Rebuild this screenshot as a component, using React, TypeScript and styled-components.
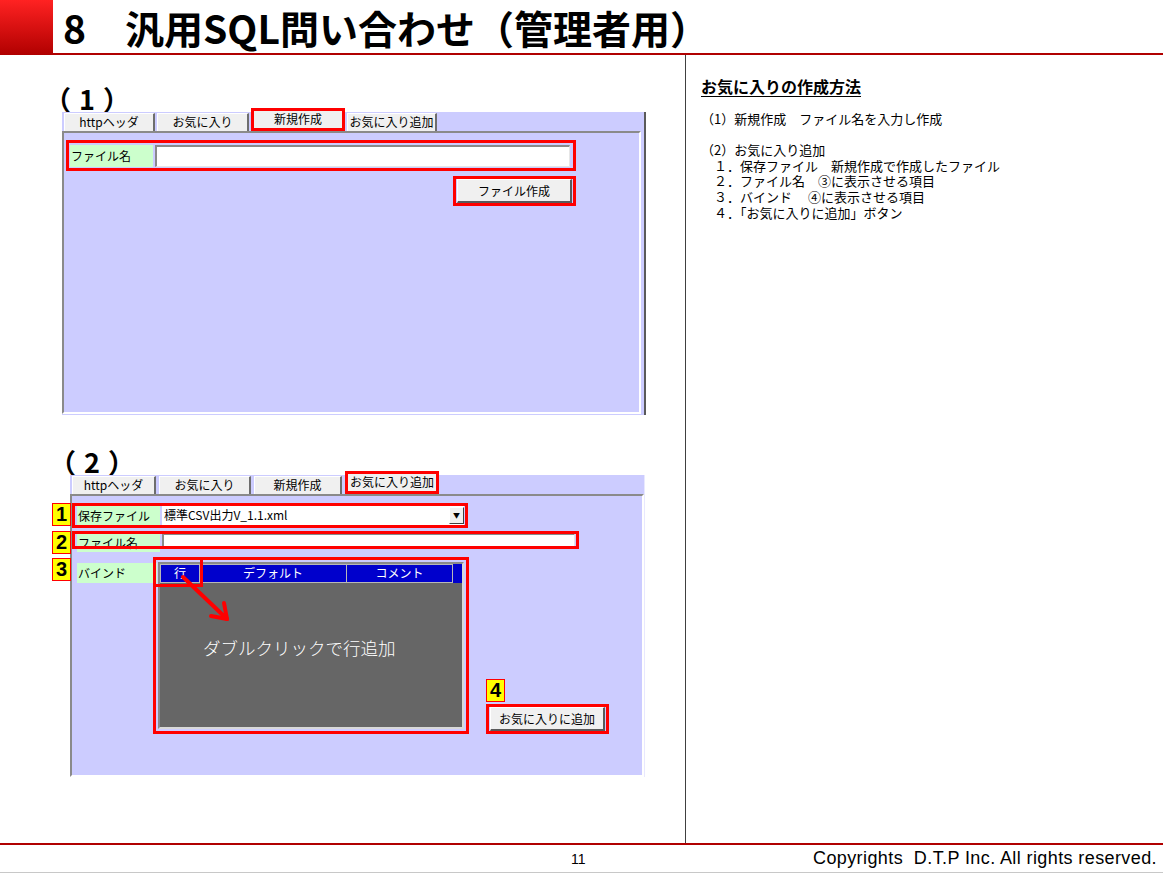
import React from "react";
import styled, { createGlobalStyle } from "styled-components";

const Global = createGlobalStyle`
  html, body { margin: 0; padding: 0; background: #fff; }
  body { font-family: "Noto Sans CJK JP", "Noto Sans", sans-serif; color: #000; }
  * { box-sizing: border-box; }
`;

const Page = styled.div`
  width: 1163px;
  height: 873px;
  display: flex;
  flex-direction: column;
  overflow: hidden;
`;

const Header = styled.header`
  display: flex;
  height: 55px;
  flex: none;
`;

const RedBlock = styled.div`
  width: 53px;
  background: linear-gradient(#ff2222, #b00000);
`;

const TitleBar = styled.div`
  flex: 1;
  display: flex;
  align-items: center;
  padding-left: 10px;
  border-bottom: 2px solid #b00000;
`;

const Title = styled.h1`
  margin: 0;
  font-size: 39px;
  font-weight: 700;
  line-height: 48px;
  white-space: nowrap;
  font-family: "Noto Sans CJK JP", sans-serif;
`;

const Main = styled.main`
  flex: 1;
  min-height: 0;
  display: grid;
  grid-template-columns: 685px 1px 1fr;
`;

const LeftCol = styled.section`
  display: flex;
  flex-direction: column;
  padding-top: 30px;
`;

const Divider = styled.div`
  background: #404040;
`;

const RightCol = styled.section`
  padding: 21px 0 0 15px;
`;

const Figure = styled.div<{ $left: number; $top?: number }>`
  display: flex;
  flex-direction: column;
  align-items: flex-start;
  margin-left: ${(p) => p.$left}px;
  margin-top: ${(p) => p.$top ?? 0}px;
`;

const Caption = styled.div<{ $shift: number }>`
  font-size: 27px;
  font-weight: 700;
  line-height: 27px;
  height: 27px;
  letter-spacing: 8px;
  margin-left: ${(p) => p.$shift}px;
  white-space: nowrap;
`;

const Window = styled.div<{ $w: number; $h: number; $edge?: boolean }>`
  width: ${(p) => p.$w}px;
  height: ${(p) => p.$h}px;
  background: #ccccff;
  display: flex;
  flex-direction: column;
  ${(p) =>
    p.$edge
      ? "border-right: 2px solid #5a5a5a; padding-right: 3px; padding-bottom: 1px;"
      : "border-right: 1px solid #e8e8ff;"}
`;

const TabStrip = styled.div<{ $gap: number; $pad: number }>`
  display: flex;
  align-items: flex-end;
  gap: ${(p) => p.$gap}px;
  height: 19px;
  padding-left: ${(p) => p.$pad}px;
  flex: none;
`;

const Tab = styled.div<{ $w: number }>`
  width: ${(p) => p.$w}px;
  height: 18px;
  background: #f0f0f0;
  font-size: 12px;
  line-height: 16px;
  text-align: center;
  border-top: 1px solid #ffffff;
  border-left: 1px solid #ffffff;
  border-right: 2px solid #6e6e6e;
  white-space: nowrap;
  overflow: hidden;
`;

const Mark = styled.div`
  border: 3px solid #ff0000;
`;

const TabMark = styled(Mark)`
  align-self: flex-start;
  margin-top: -4px;
  height: 23px;
  position: relative;
  z-index: 1;
`;

const ActiveTab = styled.div<{ $w: number }>`
  width: ${(p) => p.$w}px;
  height: 17px;
  background: #f0f0f0;
  font-size: 12px;
  line-height: 16px;
  text-align: center;
  white-space: nowrap;
`;

const Panel = styled.div<{ $pad: string; $bw: number }>`
  flex: 1;
  display: flex;
  flex-direction: column;
  align-items: flex-start;
  border: ${(p) => p.$bw}px solid;
  border-color: #8a8a8a #ffffff #ffffff #8a8a8a;
  padding: ${(p) => p.$pad};
`;

const RowMark = styled(Mark)<{ $w: number; $pad: string }>`
  width: ${(p) => p.$w}px;
  display: flex;
  align-items: flex-start;
  gap: 2px;
  padding: ${(p) => p.$pad};
`;

const ThinRowMark = styled.div<{ $w: number }>`
  width: ${(p) => p.$w}px;
  height: 18px;
  display: flex;
  align-items: flex-start;
  gap: 2px;
  padding: 2px 0 0 5px;
  outline: 3px solid #ff0000;
  outline-offset: -3px;
`;

const FieldLabel = styled.div<{ $w: number; $h: number }>`
  width: ${(p) => p.$w}px;
  height: ${(p) => p.$h}px;
  background: #ccffcc;
  font-size: 12px;
  line-height: ${(p) => p.$h}px;
  padding-left: 1px;
  white-space: nowrap;
  flex: none;
`;

const BindLabel = styled(FieldLabel)`
  margin: 6px 0 0 5px;
`;

const TextBox = styled.div<{ $w: number; $h: number }>`
  width: ${(p) => p.$w}px;
  height: ${(p) => p.$h}px;
  background: #ffffff;
  border-top: 2px solid #8a8a8a;
  border-left: 2px solid #8a8a8a;
  border-right: 1px solid #e6e6e6;
  border-bottom: 1px solid #e6e6e6;
  flex: none;
`;

const SelectBox = styled.div<{ $w: number }>`
  width: ${(p) => p.$w}px;
  height: 19px;
  background: #fff;
  display: flex;
  align-items: stretch;
  font-size: 12px;
  line-height: 18px;
  flex: none;
`;

const SelectText = styled.div`
  flex: 1;
  padding-left: 2px;
  white-space: nowrap;
  font-family: "Noto Sans CJK JP", "Liberation Sans", sans-serif;
`;

const DropButton = styled.div`
  width: 15px;
  margin: 1px 0;
  background: #f0f0f0;
  border-top: 1px solid #fff;
  border-left: 1px solid #fff;
  border-right: 1px solid #404040;
  border-bottom: 1px solid #404040;
  display: flex;
  align-items: center;
  justify-content: center;
  font-size: 7px;
  line-height: 1;
`;

const ButtonRow = styled.div<{ $w: number }>`
  width: ${(p) => p.$w}px;
  display: flex;
  justify-content: flex-end;
  margin-top: 5px;
`;

const ButtonMark = styled(Mark)`
  padding: 0 1px;
`;

const WinButton = styled.div`
  width: 115px;
  height: 24px;
  background: #f0f0f0;
  border-top: 1px solid #ffffff;
  border-left: 1px solid #ffffff;
  border-right: 2px solid #5a5a5a;
  border-bottom: 2px solid #5a5a5a;
  font-size: 12px;
  line-height: 21px;
  text-align: center;
  white-space: nowrap;
`;

const Row = styled.div<{ $top?: number }>`
  position: relative;
  display: flex;
  align-items: flex-start;
  margin-top: ${(p) => p.$top ?? 0}px;
`;

const Badge = styled.div`
  width: 19px;
  height: 23px;
  background: #ffff00;
  border: 1px solid #ff0000;
  font-family: "Liberation Sans", Arial, sans-serif;
  font-weight: 700;
  font-size: 20px;
  line-height: 21px;
  text-align: center;
  flex: none;
`;

const SideBadge = styled(Badge)<{ $top: number }>`
  position: absolute;
  left: -20px;
  top: ${(p) => p.$top}px;
`;

const GridMark = styled(Mark)`
  position: relative;
  width: 316px;
  height: 177px;
  padding: 2px;
  margin-left: -4px;
  flex: none;
`;

const GridBox = styled.div`
  height: 100%;
  background: #666666;
  border: 2px solid;
  border-color: #8a8a8a #d8d8d8 #d8d8d8 #8a8a8a;
  display: flex;
  flex-direction: column;
`;

const GridHead = styled.div`
  display: flex;
  height: 19px;
  background: #0000cc;
  flex: none;
`;

const HeadCell = styled.div<{ $w: number }>`
  width: ${(p) => p.$w}px;
  height: 19px;
  border: 1px solid #b8b8b8;
  border-left: none;
  color: #fff;
  font-size: 12px;
  line-height: 16px;
  text-align: center;
  white-space: nowrap;
  &:first-child {
    border-left: 1px solid #b8b8b8;
  }
`;

const GridHint = styled.div`
  color: #fff;
  font-size: 17.5px;
  font-weight: 300;
  line-height: 22px;
  margin: 54px 0 0 43px;
  white-space: nowrap;
`;

const CellMark = styled(Mark)`
  position: absolute;
  left: -3px;
  top: -3px;
  width: 50px;
  height: 30px;
`;

const ArrowSvg = styled.svg`
  position: absolute;
  left: 0;
  top: 0;
  overflow: visible;
`;

const ButtonCol = styled.div`
  align-self: flex-end;
  display: flex;
  flex-direction: column;
  align-items: flex-start;
  gap: 2px;
  margin-left: 17px;
`;

const NoteTitle = styled.h2`
  margin: 0 0 15px;
  font-size: 16px;
  font-weight: 700;
  line-height: 20px;
  text-decoration: underline;
  text-underline-offset: 3px;
  white-space: nowrap;
`;

const NoteBody = styled.div`
  font-size: 13px;
  line-height: 15.6px;
  white-space: pre;
`;

const Footer = styled.footer`
  height: 30px;
  flex: none;
  border-top: 2px solid #b00000;
  border-bottom: 1px solid #c8c8c8;
  display: flex;
  align-items: center;
  font-family: "Liberation Sans", Arial, sans-serif;
`;

const PageNo = styled.div`
  margin-left: 571px;
  font-size: 14px;
`;

const Copyright = styled.div`
  margin-left: auto;
  margin-right: 6px;
  font-size: 18px;
  letter-spacing: 0.4px;
  white-space: pre;
`;

export default function App() {
  return (
    <Page>
      <Global />
      <Header>
        <RedBlock />
        <TitleBar>
          <Title>8　汎用SQL問い合わせ（管理者用）</Title>
        </TitleBar>
      </Header>
      <Main>
        <LeftCol>
          <Figure $left={62}>
            <Caption $shift={-18}>（1）</Caption>
            <Window $w={584} $h={303} $edge>
              <TabStrip $gap={2} $pad={2}>
                <Tab $w={91}>httpヘッダ</Tab>
                <Tab $w={92}>お気に入り</Tab>
                <TabMark>
                  <ActiveTab $w={88}>新規作成</ActiveTab>
                </TabMark>
                <Tab $w={90}>お気に入り追加</Tab>
              </TabStrip>
              <Panel $bw={2} $pad="7px 0 0 2px">
                <RowMark $w={510} $pad="2px 3px 1px 1px">
                  <FieldLabel $w={83} $h={22}>ファイル名</FieldLabel>
                  <TextBox $w={415} $h={22} />
                </RowMark>
                <ButtonRow $w={510}>
                  <ButtonMark>
                    <WinButton>ファイル作成</WinButton>
                  </ButtonMark>
                </ButtonRow>
              </Panel>
            </Window>
          </Figure>

          <Figure $left={70} $top={33}>
            <Caption $shift={-21}>（2）</Caption>
            <Window $w={575} $h={302}>
              <TabStrip $gap={3} $pad={2}>
                <Tab $w={84}>httpヘッダ</Tab>
                <Tab $w={92}>お気に入り</Tab>
                <Tab $w={88}>新規作成</Tab>
                <TabMark>
                  <ActiveTab $w={88}>お気に入り追加</ActiveTab>
                </TabMark>
              </TabStrip>
              <Panel $bw={2} $pad="7px 0 0 0">
                <Row>
                  <SideBadge $top={0}>1</SideBadge>
                  <RowMark $w={396} $pad="0 1px 0 2px">
                    <FieldLabel $w={83} $h={19}>保存ファイル</FieldLabel>
                    <SelectBox $w={302}>
                      <SelectText>標準CSV出力V_1.1.xml</SelectText>
                      <DropButton>▼</DropButton>
                    </SelectBox>
                  </RowMark>
                </Row>
                <Row $top={3}>
                  <SideBadge $top={0}>2</SideBadge>
                  <ThinRowMark $w={507}>
                    <FieldLabel $w={83} $h={19}>ファイル名</FieldLabel>
                    <TextBox $w={413} $h={16} />
                  </ThinRowMark>
                </Row>
                <Row $top={8}>
                  <SideBadge $top={1}>3</SideBadge>
                  <BindLabel $w={80} $h={20}>バインド</BindLabel>
                  <GridMark>
                    <GridBox>
                      <GridHead>
                        <HeadCell $w={40}>行</HeadCell>
                        <HeadCell $w={147}>デフォルト</HeadCell>
                        <HeadCell $w={106}>コメント</HeadCell>
                      </GridHead>
                      <GridHint>ダブルクリックで行追加</GridHint>
                    </GridBox>
                    <CellMark />
                    <ArrowSvg width="100" height="80" viewBox="0 0 100 80">
                      <g stroke="#ff0000" strokeWidth="4" strokeLinecap="round" fill="none">
                        <line x1="27" y1="17" x2="71" y2="59" />
                        <line x1="71" y1="59" x2="68" y2="43" />
                        <line x1="71" y1="59" x2="55" y2="56" />
                      </g>
                    </ArrowSvg>
                  </GridMark>
                  <ButtonCol>
                    <Badge>4</Badge>
                    <ButtonMark>
                      <WinButton>お気に入りに追加</WinButton>
                    </ButtonMark>
                  </ButtonCol>
                </Row>
              </Panel>
            </Window>
          </Figure>
        </LeftCol>
        <Divider />
        <RightCol>
          <NoteTitle>お気に入りの作成方法</NoteTitle>
          <NoteBody>
            {"（1）新規作成　ファイル名を入力し作成\n\n（2）お気に入り追加\n　１．保存ファイル　新規作成で作成したファイル\n　２．ファイル名　③に表示させる項目\n　３．バインド　 ④に表示させる項目\n　４．「お気に入りに追加」ボタン"}
          </NoteBody>
        </RightCol>
      </Main>
      <Footer>
        <PageNo>11</PageNo>
        <Copyright>Copyrights  D.T.P Inc. All rights reserved.</Copyright>
      </Footer>
    </Page>
  );
}
